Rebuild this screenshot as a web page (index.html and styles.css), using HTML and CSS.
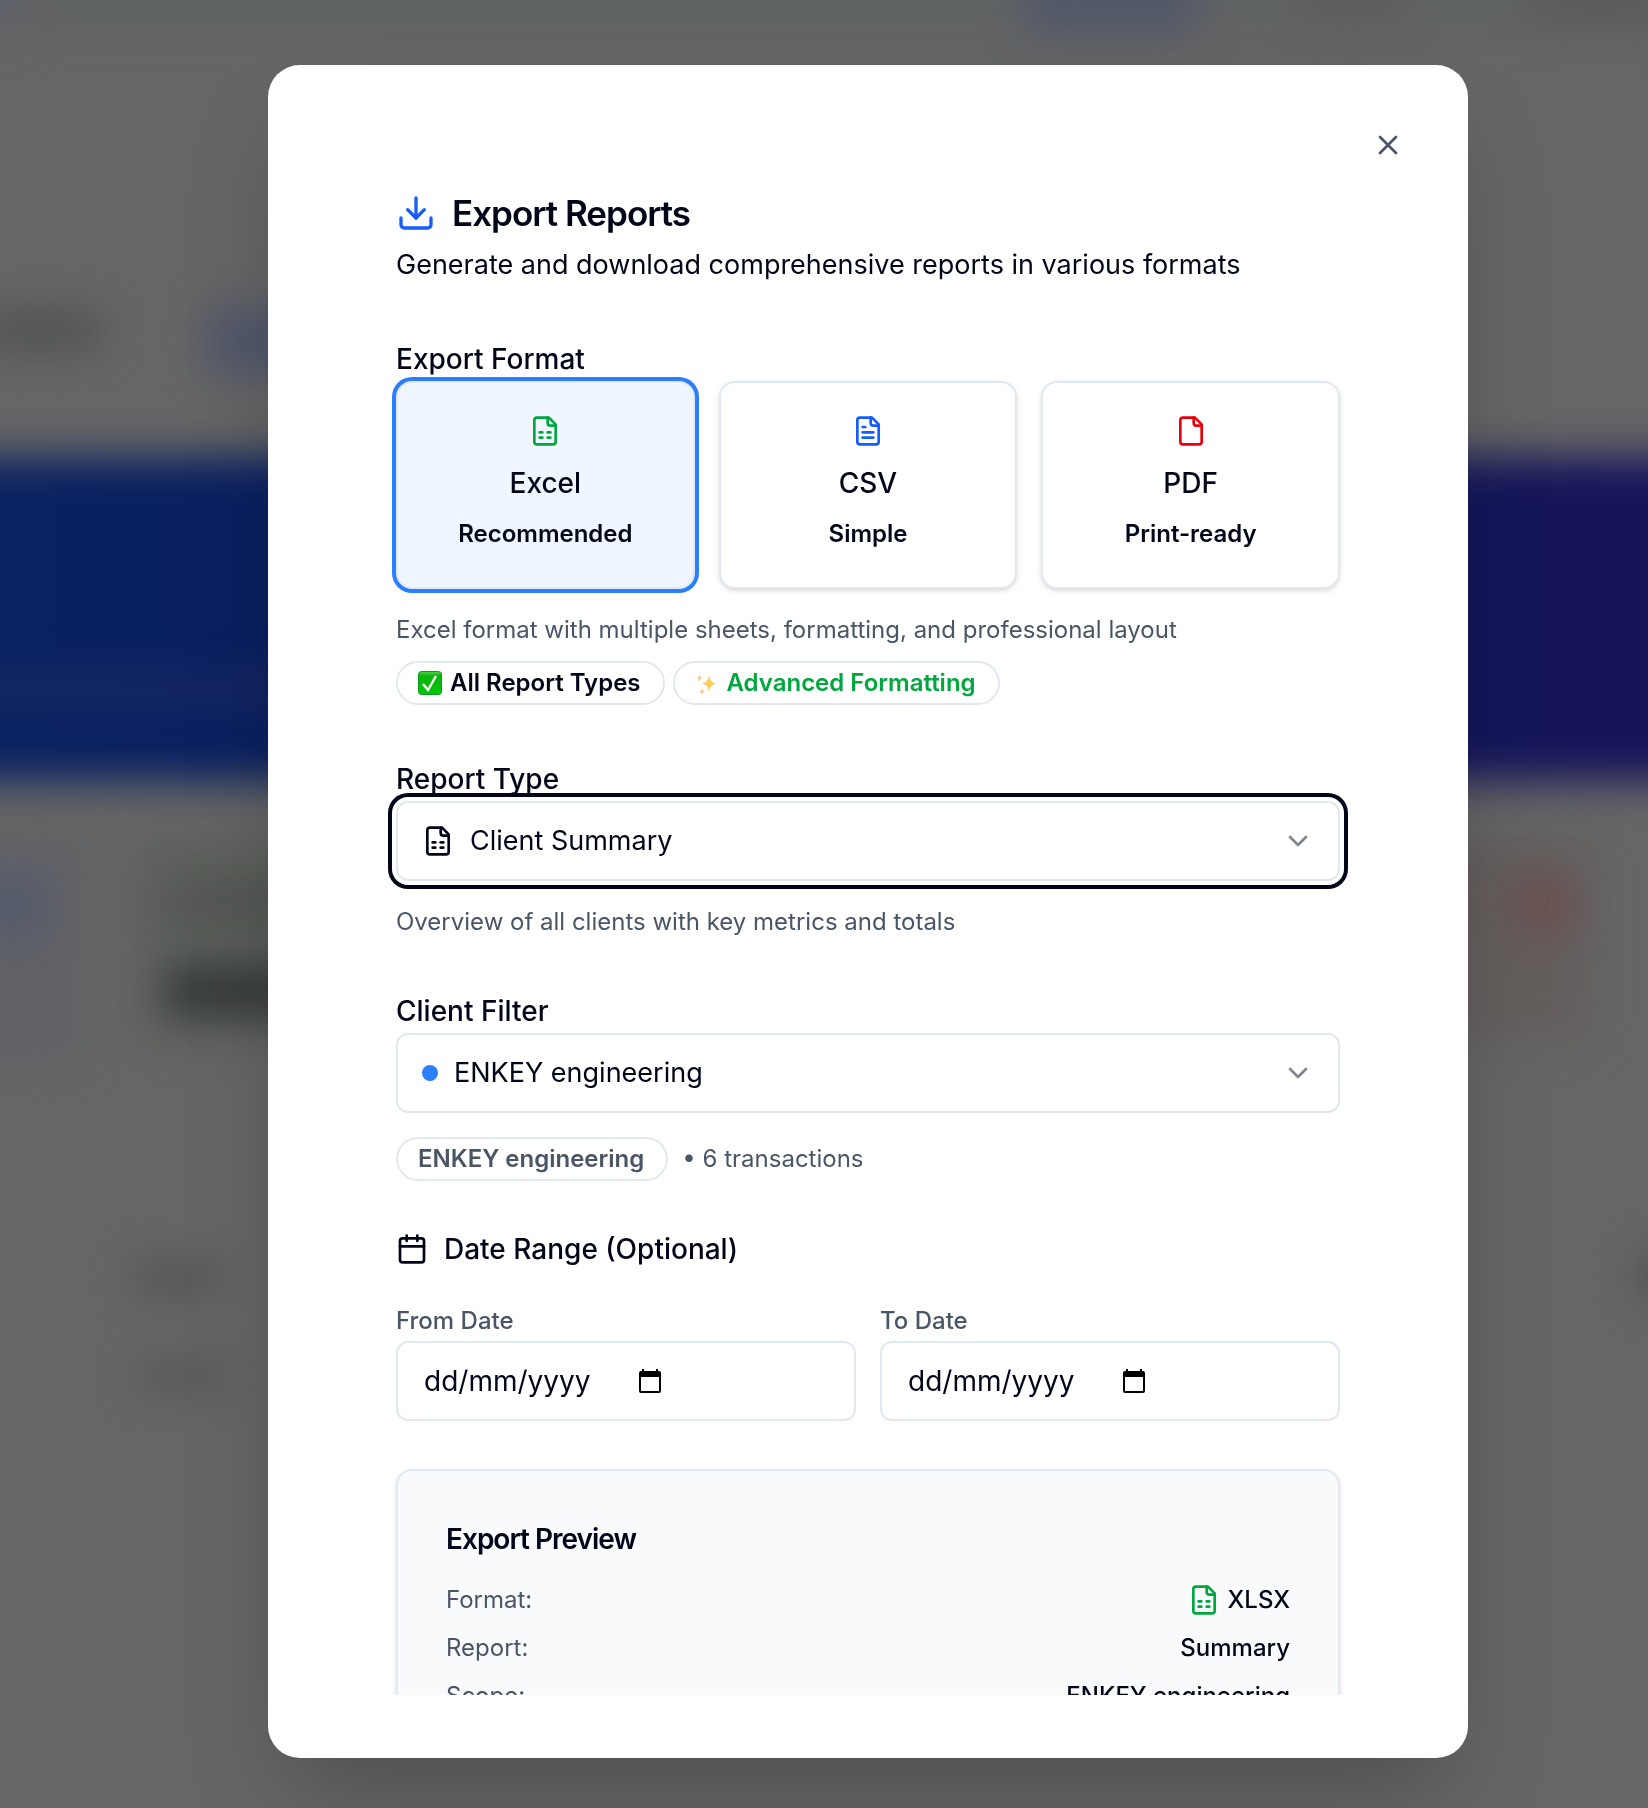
FILE: index.html
```html
<!DOCTYPE html>
<html lang="en-GB">
<head>
<meta charset="utf-8">
<meta name="viewport" content="width=device-width, initial-scale=1">
<title>Export Reports</title>
<link rel="stylesheet" href="styles.css">
</head>
<body>
<svg class="sprite" aria-hidden="true">
  <symbol id="i-sheet" viewBox="0 0 24 24"><path d="M15 2H6a2 2 0 0 0-2 2v16a2 2 0 0 0 2 2h12a2 2 0 0 0 2-2V7Z"/><path d="M14 2v4a2 2 0 0 0 2 2h4"/><path d="M8 13h2"/><path d="M14 13h2"/><path d="M8 17h2"/><path d="M14 17h2"/></symbol>
  <symbol id="i-text" viewBox="0 0 24 24"><path d="M15 2H6a2 2 0 0 0-2 2v16a2 2 0 0 0 2 2h12a2 2 0 0 0 2-2V7Z"/><path d="M14 2v4a2 2 0 0 0 2 2h4"/><path d="M10 9H8"/><path d="M16 13H8"/><path d="M16 17H8"/></symbol>
  <symbol id="i-file" viewBox="0 0 24 24"><path d="M15 2H6a2 2 0 0 0-2 2v16a2 2 0 0 0 2 2h12a2 2 0 0 0 2-2V7Z"/><path d="M14 2v4a2 2 0 0 0 2 2h4"/></symbol>
  <symbol id="i-download" viewBox="0 0 24 24"><path d="M12 15V3"/><path d="M21 15v4a2 2 0 0 1-2 2H5a2 2 0 0 1-2-2v-4"/><path d="m7 10 5 5 5-5"/></symbol>
  <symbol id="i-calendar" viewBox="0 0 24 24"><path d="M8 2v4"/><path d="M16 2v4"/><rect width="18" height="18" x="3" y="4" rx="2"/><path d="M3 10h18"/></symbol>
  <symbol id="i-chevron" viewBox="0 0 24 24"><path d="m6 9 6 6 6-6"/></symbol>
  <symbol id="i-x" viewBox="0 0 24 24"><path d="M18 6 6 18"/><path d="m6 6 12 12"/></symbol>
  <symbol id="i-picker" viewBox="0 0 22 24"><path fill="currentColor" stroke="none" fill-rule="evenodd" d="M3 0h2v2h12V0h2v2h1a2 2 0 0 1 2 2v18a2 2 0 0 1-2 2H2a2 2 0 0 1-2-2V4a2 2 0 0 1 2-2h1ZM2 8v14h18V8Z"/></symbol>
</svg>

<div class="backdrop" aria-hidden="true">
  <div class="scene">
    <i class="blob nav-left"></i><i class="blob nav-main"></i><i class="blob nav-active"></i><i class="blob nav-b"></i><i class="blob nav-c"></i>
    <i class="blob crumb"></i><i class="blob action"></i>
    <i class="blob banner"></i><i class="blob banner-line"></i>
    <i class="blob stat-blue"></i><i class="blob stat-blue-icon"></i>
    <i class="blob stat-green"></i><i class="blob stat-label"></i><i class="blob stat-value"></i>
    <i class="blob stat-red"></i><i class="blob stat-red-icon"></i>
    <i class="blob row-a"></i><i class="blob row-b"></i><i class="blob row-c"></i>
  </div>
</div>

<div class="overlay">
  <div class="modal" role="dialog" aria-modal="true" aria-labelledby="title">
    <button class="close" type="button" aria-label="Close"><svg class="icon"><use href="#i-x"/></svg></button>
    <form class="scroll">
      <header class="head">
        <h2 class="title" id="title"><svg class="icon icon-lg blue"><use href="#i-download"/></svg>Export Reports</h2>
        <p class="lead">Generate and download comprehensive reports in various formats</p>
      </header>

      <section class="section">
        <h3 class="label">Export Format</h3>
        <div class="formats">
          <button class="format selected" type="button" aria-pressed="true"><svg class="icon green"><use href="#i-sheet"/></svg><span class="format-name">Excel</span><span class="format-tag">Recommended</span></button>
          <button class="format" type="button" aria-pressed="false"><svg class="icon blue"><use href="#i-text"/></svg><span class="format-name">CSV</span><span class="format-tag">Simple</span></button>
          <button class="format" type="button" aria-pressed="false"><svg class="icon red"><use href="#i-file"/></svg><span class="format-name">PDF</span><span class="format-tag">Print-ready</span></button>
        </div>
        <p class="hint">Excel format with multiple sheets, formatting, and professional layout</p>
        <div class="pills">
          <span class="pill"><svg class="emoji" viewBox="0 0 24 24"><defs><linearGradient id="g" x1="0" y1="0" x2="0" y2="1"><stop offset="0" stop-color="#4fd04f"/><stop offset=".2" stop-color="#0bb50b"/><stop offset="1" stop-color="#06c406"/></linearGradient></defs><rect x="0.5" y="0.5" width="23" height="23" rx="3" fill="url(#g)" stroke="#0a9c1a"/><path d="M5 13 10 19 18 5" fill="none" stroke="#fff" stroke-width="2.4"/></svg>All Report Types</span>
          <span class="pill green"><svg class="emoji" viewBox="0 0 24 24"><path fill="#fdcf5c" d="M14 4c1 5.500 2.500 7.500 7 8.500-4.500 1.500-6 3-7 8.500-1-5.500-2.500-7-7-8.500C11.500 11.500 13 9.500 14 4Z"/><path fill="#f9c77c" d="M4.500 3c.4 2.500 1 3.300 2.800 4-1.800.5-2.400 1.500-2.800 4-.4-2.500-1-3.500-2.800-4C3.500 6.300 4.100 5.500 4.500 3ZM7 17c.4 2 1 2.800 2.600 3.500C8 21 7.400 22 7 24c-.4-2-1-3-2.600-3.500C6 19.800 6.600 19 7 17Z"/></svg>Advanced Formatting</span>
        </div>
      </section>

      <section class="section">
        <label class="label" for="report">Report Type</label>
        <button class="select focused" id="report" type="button" role="combobox" aria-expanded="false"><svg class="icon"><use href="#i-sheet"/></svg><span class="select-value">Client Summary</span><svg class="icon chevron"><use href="#i-chevron"/></svg></button>
        <p class="hint">Overview of all clients with key metrics and totals</p>
      </section>

      <section class="section">
        <label class="label" for="client">Client Filter</label>
        <button class="select" id="client" type="button" role="combobox" aria-expanded="false"><span class="dot"></span><span class="select-value">ENKEY engineering</span><svg class="icon chevron"><use href="#i-chevron"/></svg></button>
        <div class="client-info"><span class="pill">ENKEY engineering</span><span>• 6 transactions</span></div>
      </section>

      <section class="dates">
        <h3 class="dates-title"><svg class="icon"><use href="#i-calendar"/></svg>Date Range (Optional)</h3>
        <div class="date-grid">
          <div class="field">
            <label class="field-label" for="from">From Date</label>
            <div class="date-box"><input class="date-input" id="from" type="text" placeholder="dd/mm/yyyy"><button class="picker" type="button" aria-label="Pick from date"><svg class="picker-icon"><use href="#i-picker"/></svg></button></div>
          </div>
          <div class="field">
            <label class="field-label" for="to">To Date</label>
            <div class="date-box"><input class="date-input" id="to" type="text" placeholder="dd/mm/yyyy"><button class="picker" type="button" aria-label="Pick to date"><svg class="picker-icon"><use href="#i-picker"/></svg></button></div>
          </div>
        </div>
      </section>

      <section class="preview">
        <h3 class="preview-title">Export Preview</h3>
        <dl class="rows">
          <div class="row"><dt>Format:</dt><dd><svg class="icon green"><use href="#i-sheet"/></svg>XLSX</dd></div>
          <div class="row"><dt>Report:</dt><dd>Summary</dd></div>
          <div class="row"><dt>Scope:</dt><dd>ENKEY engineering</dd></div>
        </dl>
      </section>
    </form>
  </div>
</div>
</body>
</html>
```
FILE: styles.css
```css
:root {
  --ink: #020618;
  --muted: #4a5565;
  --line: #e2e8f0;
  --blue: #155dfc;
  --green: #00a63e;
  --red: #e7000b;
}

* { box-sizing: border-box; margin: 0; padding: 0; }

body {
  height: 100vh;
  overflow: hidden;
  background: #666;
  color: var(--ink);
  font-family: Inter, "Liberation Sans", sans-serif;
  font-size: 28px;
  line-height: 40px;
}

button, input { font: inherit; color: inherit; background: none; border: 0; }
h2, h3 { font: inherit; }

.sprite { position: absolute; width: 0; height: 0; }

.icon {
  flex: none;
  width: 32px;
  height: 32px;
  fill: none;
  stroke: currentColor;
  stroke-width: 2;
  stroke-linecap: round;
  stroke-linejoin: round;
}
.icon-lg { width: 40px; height: 40px; }
.blue { color: var(--blue); }
.green { color: var(--green); }
.red { color: var(--red); }

/* Dimmed dashboard behind the dialog */
.backdrop { position: fixed; inset: 0; overflow: hidden; }
.scene { position: absolute; inset: 0; }
.blob { position: absolute; filter: blur(20px); border-radius: 8px; }
.nav-left { left: -40px; top: -40px; width: 60px; height: 60px; background: #5a6070; }
.nav-main { left: 20px; right: -40px; top: -40px; height: 76px; background: #606364; }
.nav-active { left: 1025px; top: -20px; width: 170px; height: 50px; background: #50566a; }
.nav-b { left: 1300px; top: -14px; width: 100px; height: 28px; background: #5a5a5b; }
.nav-c { left: 1530px; top: -14px; width: 140px; height: 30px; background: #575859; }
.crumb { left: -20px; top: 314px; width: 120px; height: 34px; background: #4d4e4e; }
.action { left: 206px; top: 308px; width: 200px; height: 66px; background: #50566a; }
.banner {
  left: -60px; right: -60px; top: 457px; height: 324px;
  border-radius: 0;
  background: linear-gradient(90deg, #0a2261 60px, #0a1f60 22%, #14165a 84%, #18155a);
}
.banner-line { left: -60px; width: 400px; top: 676px; height: 26px; background: #192a62; }
.stat-blue { left: -60px; top: 840px; width: 140px; height: 220px; background: #606267; }
.stat-blue-icon { left: -20px; top: 880px; width: 62px; height: 50px; background: #52596c; }
.stat-green { left: 140px; top: 840px; width: 220px; height: 200px; background: #5c605b; }
.stat-label { left: 165px; top: 888px; width: 200px; height: 28px; background: #4e514f; }
.stat-value { left: 166px; top: 968px; width: 200px; height: 46px; background: #333735; }
.stat-red { left: 1300px; top: 840px; width: 290px; height: 200px; background: #645e5d; }
.stat-red-icon { left: 1518px; top: 882px; width: 52px; height: 46px; background: #6e4c4c; }
.row-a { left: 136px; top: 1262px; width: 80px; height: 30px; background: #515151; }
.row-b { left: 140px; top: 1362px; width: 86px; height: 28px; background: #555; }
.row-c { left: 1640px; top: 1254px; width: 60px; height: 44px; background: #4e4f4f; }

.overlay {
  position: fixed;
  inset: 0;
  display: flex;
  justify-content: center;
  padding: 65px 0 50px;
}
.modal {
  position: relative;
  display: flex;
  flex-direction: column;
  width: 100%;
  max-width: 1200px;
  margin-left: 88px;
  padding: 64px 64px 63px;
  border-radius: 32px;
  background: #fff;
  box-shadow: 0 50px 100px -24px rgba(0, 0, 0, 0.25);
}
.close {
  position: absolute;
  top: 64px;
  right: 64px;
  width: 32px;
  height: 32px;
  color: var(--muted);
}
.scroll {
  display: flex;
  flex-direction: column;
  gap: 48px;
  flex: 1;
  min-height: 0;
  padding: 64px;
  overflow-y: auto;
  scrollbar-width: none;
}
.scroll > * { flex: none; }

.head { display: flex; flex-direction: column; gap: 12px; }
.title {
  display: flex;
  align-items: center;
  gap: 16px;
  font-size: 35px;
  font-weight: 700;
  font-weight: 600;
  letter-spacing: -1px;
}
.lead { font-size: 27px; }

.section { display: flex; flex-direction: column; padding-top: 12px; }
.label { margin-bottom: 8px; font-weight: 500; line-height: 28px; }
.hint { margin-top: 24px; font-size: 24px; line-height: 34px; color: var(--muted); }
.hint:last-child { margin-bottom: -2px; }

.formats { display: grid; grid-template-columns: repeat(3, 1fr); gap: 24px; }
.format {
  display: flex;
  flex-direction: column;
  align-items: center;
  padding: 32px;
  border: 2px solid var(--line);
  border-radius: 16px;
  background: #fff;
  box-shadow: 0 2px 6px rgba(0, 0, 0, 0.1), 0 2px 4px -2px rgba(0, 0, 0, 0.1);
}
.format.selected { background: #eff6ff; box-shadow: 0 0 0 4px #2b7fff; }
.format-name { margin-top: 16px; font-weight: 500; }
.format-tag { margin-top: 10px; font-size: 24px; font-weight: 600; line-height: 42px; }

.pills { display: flex; gap: 8px; margin-top: 14px; }
.pill {
  display: flex;
  align-items: center;
  gap: 8px;
  padding: 4px 22px 4px 20px;
  border: 2px solid var(--line);
  border-radius: 22px;
  font-size: 24px;
  font-weight: 600;
  line-height: 32px;
}
.emoji { width: 24px; height: 24px; }

.select {
  display: flex;
  align-items: center;
  gap: 16px;
  height: 80px;
  padding: 0 24px;
  border: 2px solid var(--line);
  border-radius: 12px;
  background: #fff;
  text-align: left;
}
.select.focused { box-shadow: 0 0 0 4px #fff, 0 0 0 8px var(--ink); }
.select-value { flex: 1; font-size: 27px; }
.chevron { color: #80858f; }
.dot { width: 16px; height: 16px; border-radius: 50%; background: #2b7fff; }

.client-info {
  display: flex;
  align-items: center;
  gap: 14px;
  margin-top: 24px;
  font-size: 24px;
  color: var(--muted);
}

.dates { display: flex; flex-direction: column; gap: 38px; }
.dates-title { display: flex; align-items: center; gap: 16px; font-weight: 500; }
.date-grid { display: grid; grid-template-columns: 1fr 1fr; gap: 24px; }
.field { display: flex; flex-direction: column; gap: 6px; }
.field-label { font-size: 24px; font-weight: 500; line-height: 28px; color: var(--muted); }
.date-box {
  display: flex;
  align-items: center;
  height: 80px;
  padding: 0 26px;
  border: 2px solid var(--line);
  border-radius: 12px;
}
.date-input { width: 215px; height: 40px; }
.date-input::placeholder { color: var(--ink); opacity: 1; }
.picker { display: flex; color: #000; }
.picker-icon { width: 22px; height: 24px; }

.preview {
  padding: 48px;
  border: 2px solid var(--line);
  border-radius: 16px;
  background: #f9fafc;
  box-shadow: 0 2px 6px rgba(0, 0, 0, 0.1), 0 2px 4px -2px rgba(0, 0, 0, 0.1);
}
.preview-title { font-weight: 600; letter-spacing: -1px; }
.rows { display: flex; flex-direction: column; gap: 16px; margin-top: 25px; font-size: 24px; line-height: 32px; }
.row { display: flex; justify-content: space-between; }
.row dt { color: var(--muted); }
.row dd { display: flex; align-items: center; gap: 8px; font-weight: 500; }
```
